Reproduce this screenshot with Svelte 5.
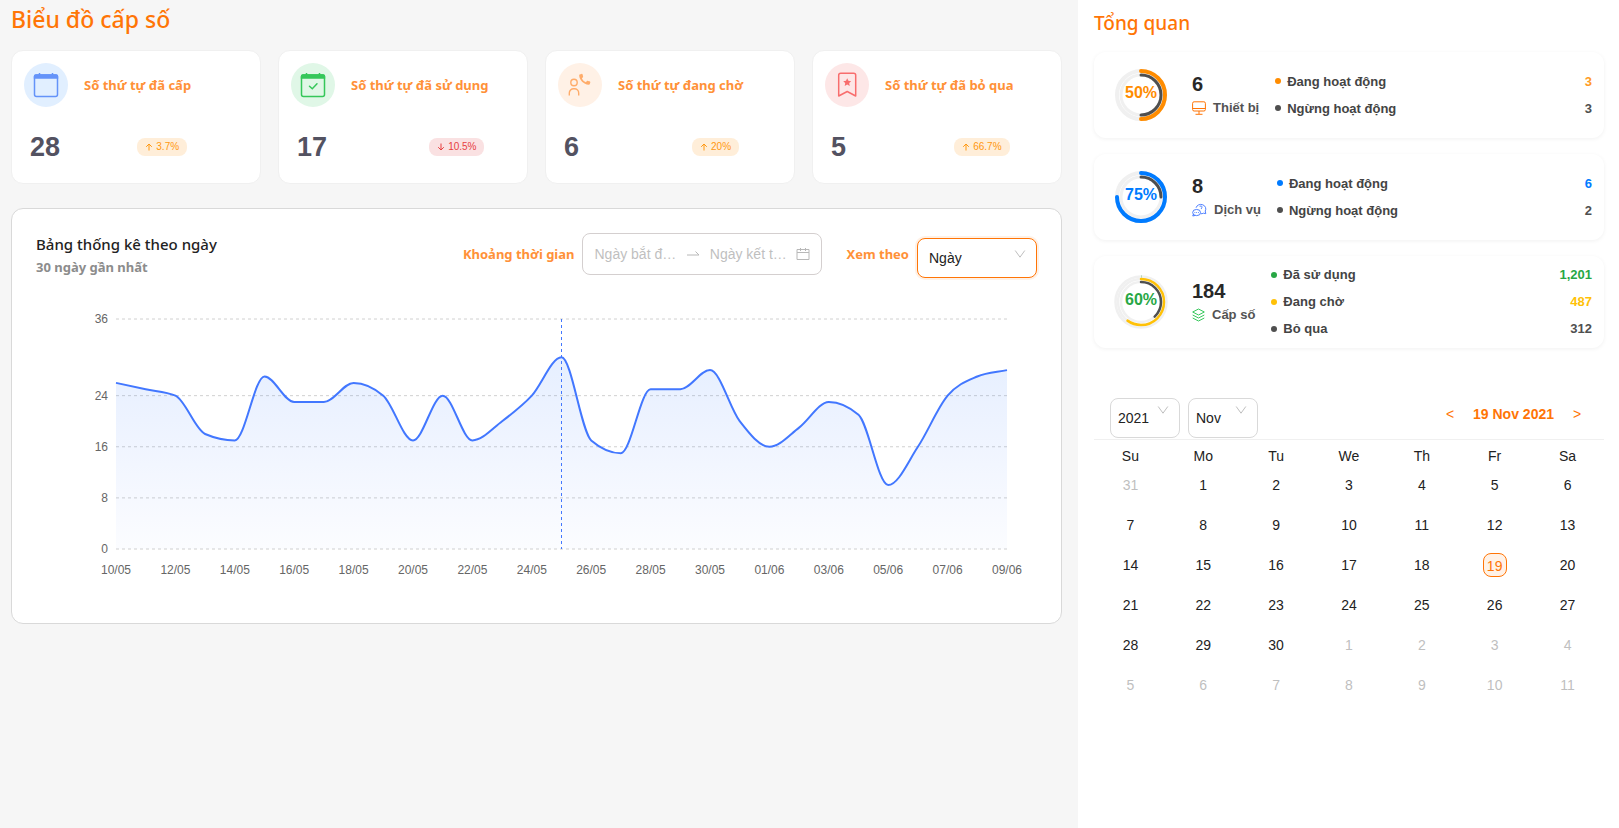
<script>
  const cards = [
    { icon: 'calendar', tone: 'blue', label: 'Số thứ tự đã cấp', value: 28, change: '3.7%', up: true },
    { icon: 'check', tone: 'green', label: 'Số thứ tự đã sử dụng', value: 17, change: '10.5%', up: false },
    { icon: 'contact', tone: 'orange', label: 'Số thứ tự đang chờ', value: 6, change: '20%', up: true },
    { icon: 'bookmark', tone: 'red', label: 'Số thứ tự đã bỏ qua', value: 5, change: '66.7%', up: true }
  ];

  const overview = [
    {
      icon: 'device', name: 'Thiết bị', total: 6, percent: 50, color: '#ff8c00',
      rings: [
        { r: 24, w: 4, share: 0.5, color: '#ff8c00' },
        { r: 20, w: 3, share: 0.5, color: '#4f4f4f' }
      ],
      rows: [
        { name: 'Đang hoạt động', value: '3', color: '#ff8c00', text: '#ff9b26' },
        { name: 'Ngừng hoạt động', value: '3', color: '#4f4f4f', text: '#4f4f4f' }
      ]
    },
    {
      icon: 'service', name: 'Dịch vụ', total: 8, percent: 75, color: '#007bff',
      rings: [
        { r: 24, w: 4, share: 0.75, color: '#007bff' },
        { r: 20, w: 3, share: 0.25, color: '#4f4f4f' }
      ],
      rows: [
        { name: 'Đang hoạt động', value: '6', color: '#007bff', text: '#007bff' },
        { name: 'Ngừng hoạt động', value: '2', color: '#4f4f4f', text: '#4f4f4f' }
      ]
    },
    {
      icon: 'layers', name: 'Cấp số', total: 184, percent: 60, color: '#28a745',
      rings: [
        { r: 25.5, w: 2.5, share: 0.002, color: '#28a745' },
        { r: 23, w: 2.5, share: 0.6, color: '#ffc107' },
        { r: 20, w: 2.5, share: 0.38, color: '#4f4f4f' }
      ],
      rows: [
        { name: 'Đã sử dụng', value: '1,201', color: '#28a745', text: '#28a745' },
        { name: 'Đang chờ', value: '487', color: '#ffc107', text: '#ffc107' },
        { name: 'Bỏ qua', value: '312', color: '#4f4f4f', text: '#4f4f4f' }
      ]
    }
  ];

  const weekdays = ['Su', 'Mo', 'Tu', 'We', 'Th', 'Fr', 'Sa'];
  const weeks = Array.from({ length: 6 }, (_, w) =>
    Array.from({ length: 7 }, (_, d) => {
      const n = w * 7 + d;
      if (n === 0) return { day: 31, other: true };
      if (n > 30) return { day: n - 30, other: true };
      return { day: n, other: false };
    })
  );

  const series = [26, 25, 24, 18, 17, 27, 23, 23, 26, 24, 17, 24, 17, 20, 24, 30, 17, 15, 25, 25, 28, 20, 16, 19, 23, 21, 10, 16, 24, 27, 28];
  const dates = ['10/05', '12/05', '14/05', '16/05', '18/05', '20/05', '22/05', '24/05', '26/05', '28/05', '30/05', '01/06', '03/06', '05/06', '07/06', '09/06'];
  const ticks = [36, 24, 16, 8, 0];
  const top = 41;
  const bottom = 271;
  const left = 80;

  let width = $state(1001);
  const right = $derived(width - 30);
  const xAt = (i) => left + ((right - left) * i) / (series.length - 1);
  const yAt = (v) => bottom - ((bottom - top) * v) / 36;

  // Monotone cubic through evenly spaced samples: never overshoots a value.
  function smooth(pts) {
    const step = pts[1][0] - pts[0][0];
    const rise = pts.slice(1).map((p, i) => p[1] - pts[i][1]);
    const tangent = pts.map((_, i) => {
      if (i === 0) return rise[0];
      if (i === pts.length - 1) return rise[i - 1];
      const a = rise[i - 1];
      const b = rise[i];
      return (Math.sign(a) + Math.sign(b)) * Math.min(Math.abs(a), Math.abs(b), Math.abs(a + b) / 4);
    });
    return pts
      .map((p, i) => {
        if (!i) return `M${p}`;
        const q = pts[i - 1];
        return `C${q[0] + step / 3},${q[1] + tangent[i - 1] / 3} ${p[0] - step / 3},${p[1] - tangent[i] / 3} ${p}`;
      })
      .join('');
  }

  const line = $derived(smooth(series.map((v, i) => [xAt(i), yAt(v)])));
</script>

{#snippet chevron()}
  <svg class="chevron" viewBox="0 0 12 12" aria-hidden="true"><path d="M1.2 2.5 6 9.2 10.800 2.5" /></svg>
{/snippet}

<div class="page">
  <main>
    <h1>Biểu đồ cấp số</h1>

    <section class="cards">
      {#each cards as card}
        <article class="card">
          <div class="fit">
            <div class="head">
              <span class="disc {card.tone}">
                {#if card.icon === 'calendar' || card.icon === 'check'}
                  <svg viewBox="0 0 26 26" aria-hidden="true">
                    <rect x="1.500" y="3" width="23" height="21.500" rx="2" fill="none" stroke="currentColor" stroke-width="1.500" />
                    <path d="M.8 6.800V4.300a2 2 0 0 1 2-2h20.400a2 2 0 0 1 2 2v2.500z" fill="currentColor" />
                    <path d="M6.500 1v2M19.500 1v2" stroke="currentColor" stroke-width="1.500" />
                    {#if card.icon === 'check'}
                      <path d="M9.500 14.200l2.800 2.600 4.700-5" fill="none" stroke="currentColor" stroke-width="1.500" stroke-linecap="round" />
                    {/if}
                  </svg>
                {:else if card.icon === 'contact'}
                  <svg viewBox="0 0 26 26" aria-hidden="true">
                    <circle cx="7" cy="10.500" r="3.200" fill="none" stroke="currentColor" stroke-width="1.400" />
                    <path d="M2.300 23.500v-2.500a4.300 4.300 0 0 1 4.300-4.300h.8a4.300 4.300 0 0 1 4.300 4.300v2.500" fill="none" stroke="currentColor" stroke-width="1.400" />
                    <path d="M12.700 2.600l1.800-.7c.5-.2 1 .1 1.100.6l.5 2c.1.400 0 .8-.4 1.100l-.8.600c.7 1.800 2.200 3.300 4 4.100l.8-1c.3-.4.7-.5 1.100-.4l1.800.4c.5.100.8.6.7 1.100l-.5 1.700c-.1.500-.6.800-1.100.7-5.200-.6-9.300-4.600-9.500-9.300 0-.4.100-.8.500-.9z" fill="currentColor" />
                  </svg>
                {:else}
                  <svg viewBox="0 0 26 26" aria-hidden="true">
                    <path d="M4.700 24V3.300a2 2 0 0 1 2-2h13a2 2 0 0 1 2 2V24L13.200 19.500z" fill="none" stroke="currentColor" stroke-width="1.500" stroke-linejoin="round" />
                    <path d="M13.200 6.300l1.200 2.500 2.800.4-2 1.900.5 2.800-2.500-1.300-2.500 1.300.5-2.800-2-1.900 2.800-.4z" fill="currentColor" />
                  </svg>
                {/if}
              </span>
              <span class="label">{card.label}</span>
            </div>
            <div class="figures">
              <strong>{card.value}</strong>
              <span class="badge" class:down={!card.up}>
                <svg viewBox="0 0 8 8" aria-hidden="true">
                  <path d={card.up ? 'M4 7.500V1M1.200 3.800 4 1l2.800 2.800' : 'M4 .5V7M1.200 4.200 4 7l2.800-2.800'} />
                </svg>
                {card.change}
              </span>
            </div>
          </div>
        </article>
      {/each}
    </section>

    <section class="panel">
      <header>
        <div class="titles">
          <h2>Bảng thống kê theo ngày</h2>
          <p>30 ngày gần nhất</p>
        </div>
        <div class="controls">
          <label class="label" for="from">Khoảng thời gian</label>
          <div class="range">
            <input id="from" type="text" placeholder="Ngày bắt đầu" />
            <svg class="arrow" viewBox="0 0 16 16" aria-hidden="true"><path d="M2 9h12L10.500 5.500" /></svg>
            <input type="text" placeholder="Ngày kết thúc" aria-label="Ngày kết thúc" />
            <svg class="cal" viewBox="0 0 14 14" aria-hidden="true"><path d="M1 2.500h12v10H1zM1 5.500h12M4.500 1v3M9.500 1v3" /></svg>
          </div>
          <label class="label view" for="view">Xem theo</label>
          <div class="select active">
            <select id="view"><option>Ngày</option><option>Tuần</option><option>Tháng</option></select>
            {@render chevron()}
          </div>
        </div>
      </header>

      <div class="chart" bind:clientWidth={width}>
        <svg width="100%" height="321" role="img" aria-label="Bảng thống kê theo ngày">
          <defs>
            <linearGradient id="area" gradientUnits="userSpaceOnUse" x1="0" y1={yAt(30)} x2="0" y2={bottom}>
              <stop offset="0" stop-color="#3f84ff" stop-opacity="0.13" />
              <stop offset="1" stop-color="#4277ff" stop-opacity="0.02" />
            </linearGradient>
          </defs>
          {#each ticks as t}
            <line class="grid" x1={left} x2={right} y1={yAt(t)} y2={yAt(t)} />
            <text class="tick" x={left - 8} y={yAt(t) + 4} text-anchor="end">{t}</text>
          {/each}
          <path d="{line}L{right},{bottom}L{left},{bottom}Z" fill="url(#area)" />
          <line class="cursor" x1={xAt(15)} x2={xAt(15)} y1={top} y2={bottom} />
          <path class="line" d={line} />
          {#each dates as d, i}
            <text class="tick" x={xAt(i * 2)} y={bottom + 25} text-anchor="middle">{d}</text>
          {/each}
        </svg>
      </div>
    </section>
  </main>

  <aside>
    <h2 class="heading">Tổng quan</h2>

    <div class="overview">
      {#each overview as item}
        <article class="item">
          <div class="ring">
            <svg viewBox="0 0 54 54" aria-hidden="true">
              {#each item.rings as ring}
                <circle cx="27" cy="27" r={ring.r} fill="none" stroke="#f0f0f0" stroke-width={ring.w} />
              {/each}
              {#each item.rings as ring}
                <circle
                  cx="27" cy="27" r={ring.r} fill="none" stroke={ring.color} stroke-width={ring.w}
                  stroke-linecap={ring.share > 0.01 ? 'round' : 'butt'} pathLength="1"
                  stroke-dasharray="{ring.share} 2" transform="rotate(-90 27 27)"
                />
              {/each}
            </svg>
            <span style:color={item.color}>{item.percent}%</span>
          </div>
          <div class="total">
            <strong>{item.total}</strong>
            <span class="kind">
              {#if item.icon === 'device'}
                <svg width="14" height="14" viewBox="0 0 14 14" fill="none" stroke="#ff7506" aria-hidden="true">
                  <rect x=".6" y=".8" width="12.800" height="9.200" rx="1.500" /><path d="M.6 7.500h12.800M7 10v3M3.500 13.300h7" />
                </svg>
              {:else if item.icon === 'service'}
                <svg width="15" height="14" viewBox="0 0 16 14" fill="none" stroke="#4277ff" aria-hidden="true">
                  <path d="M4.300 4.600a5.300 4.800 0 1 1 9.800 3.500l.6 2.800-2.500-.5a5.300 4.800 0 0 1-2.900.6" />
                  <ellipse cx="4.900" cy="9.700" rx="4.200" ry="3.300" />
                  <path d="M1.500 11.400l-.7 2 2.600-.6M2.600 9.700h.9M4.500 9.700h.9M6.400 9.700h.9M8.300 3.800a1.200 1.200 0 1 1 1.700 1.200v1" />
                </svg>
              {:else}
                <svg width="13" height="14" viewBox="0 0 13 14" fill="none" stroke="#35c75a" stroke-linejoin="round" aria-hidden="true">
                  <path d="M6.500 1 12.300 4 6.500 7 .7 4zM.7 7l5.800 3 5.800-3M.7 10l5.800 3 5.800-3" />
                </svg>
              {/if}
              {item.name}
            </span>
          </div>
          <ul>
            {#each item.rows as row}
              <li>
                <i style:background={row.color}></i>
                <span>{row.name}</span>
                <b style:color={row.text}>{row.value}</b>
              </li>
            {/each}
          </ul>
        </article>
      {/each}
    </div>

    <section class="calendar">
      <div class="toolbar">
        <div class="select">
          <select aria-label="Năm"><option>2021</option></select>
          {@render chevron()}
        </div>
        <div class="select">
          <select aria-label="Tháng"><option>Nov</option></select>
          {@render chevron()}
        </div>
        <div class="pager">
          <button type="button" aria-label="Ngày trước">&lt;</button>
          <strong>19 Nov 2021</strong>
          <button type="button" aria-label="Ngày sau">&gt;</button>
        </div>
      </div>
      <table>
        <thead>
          <tr>{#each weekdays as d}<th scope="col">{d}</th>{/each}</tr>
        </thead>
        <tbody>
          {#each weeks as week}
            <tr>
              {#each week as cell}
                <td class:other={cell.other}>
                  <span class:today={!cell.other && cell.day === 19}>{cell.day}</span>
                </td>
              {/each}
            </tr>
          {/each}
        </tbody>
      </table>
    </section>
  </aside>
</div>

<style>
  :global(body) {
    margin: 0;
    background: #fff;
  }

  .page {
    --ui: "Liberation Sans", Arial, sans-serif;
    --head: "Segoe UI", "Noto Sans", sans-serif;
    display: grid;
    grid-template-columns: minmax(0, 1fr) 541px;
    min-height: 100vh;
    font: 14px/22px var(--ui);
    color: #222;
  }

  .page * {
    box-sizing: border-box;
  }

  h1,
  h2,
  p,
  ul {
    margin: 0;
    padding: 0;
  }

  main {
    padding: 0 16px 0 11px;
    background: #f6f6f6;
  }

  h1,
  .heading {
    font-family: var(--head);
    font-weight: 500;
    color: #ff7506;
  }

  h1 {
    font-size: 23px;
    line-height: 38px;
  }

  .cards {
    display: grid;
    grid-template-columns: repeat(4, 1fr);
    gap: 17px;
    margin: 12px 0 24px;
  }

  .card {
    height: 134px;
    padding: 12px;
    border: 1px solid #f0f0f0;
    border-radius: 12px;
    background: #fff;
  }

  .fit {
    display: inline-block;
  }

  .head {
    display: flex;
    align-items: center;
    gap: 16px;
  }

  .disc {
    display: grid;
    place-items: center;
    width: 44px;
    height: 44px;
    border-radius: 50%;
  }

  .disc svg {
    width: 26px;
    height: 26px;
  }

  .blue {
    background: #e1efff;
    color: #6493f9;
  }

  .green {
    background: #e0f7e7;
    color: #35c75a;
  }

  .orange {
    background: #fff1e6;
    color: #ffac6a;
  }

  .red {
    background: #fde7e7;
    color: #f86d6d;
  }

  .label {
    font: 700 13px/22px var(--head);
    color: #ff9138;
    white-space: nowrap;
  }

  .figures {
    display: flex;
    align-items: center;
    justify-content: space-between;
    margin-top: 24px;
    padding: 0 4px 0 6px;
  }

  .figures strong {
    font-size: 27px;
    line-height: 32px;
    color: #535261;
  }

  .badge {
    display: flex;
    align-items: center;
    gap: 3px;
    height: 18px;
    padding: 0 8px;
    border-radius: 8px;
    background: #ffeed9;
    color: #ff9810;
    font-size: 10px;
  }

  .badge.down {
    background: #fae1e2;
    color: #e73f3f;
  }

  .badge svg {
    width: 8px;
    height: 8px;
    fill: none;
    stroke: currentColor;
  }

  .panel {
    padding: 21px 24px 24px;
    border: 1px solid #d9d9d9;
    border-radius: 12px;
    background: #fff;
  }

  header {
    display: flex;
    align-items: center;
    justify-content: space-between;
  }

  .titles {
    padding-top: 2px;
    font-family: var(--head);
  }

  .titles h2 {
    font-size: 15px;
    font-weight: 500;
    line-height: 24px;
  }

  .titles p {
    font-size: 13px;
    font-weight: 700;
    color: #8c8c8c;
  }

  .controls {
    display: flex;
    align-items: center;
    gap: 8px;
  }

  .view {
    margin-left: 16px;
  }

  .range {
    display: flex;
    align-items: center;
    justify-content: space-between;
    width: 240px;
    height: 42px;
    padding: 0 11px;
    border: 1px solid #d4cfcf;
    border-radius: 8px;
    background: #fff;
  }

  .range input {
    width: 82px;
    padding: 0;
    border: 0;
    outline: 0;
    background: none;
    font: 14px/22px var(--ui);
    color: #222;
    text-overflow: ellipsis;
  }

  .range input::placeholder {
    color: #bfbfbf;
    opacity: 1;
  }

  .range svg {
    fill: none;
    stroke: #b8b8b8;
  }

  .arrow {
    width: 16px;
    height: 16px;
    margin: 0 4px;
  }

  .cal {
    width: 14px;
    height: 14px;
  }

  .select {
    position: relative;
    width: 70px;
  }

  .select select {
    display: block;
    width: 100%;
    height: 40px;
    padding: 0 7px;
    border: 1px solid #d9d9d9;
    border-radius: 8px;
    outline: 0;
    appearance: none;
    background: #fff;
    font: 14px/22px var(--ui);
    color: #222;
  }

  .select.active {
    width: 120px;
    margin-top: 8px;
  }

  .active select {
    padding: 0 11px;
    border-color: #ff7506;
    box-shadow: 0 0 0 2px #fff1e6;
  }

  .chevron {
    position: absolute;
    top: 6px;
    right: 11px;
    width: 12px;
    height: 12px;
    fill: none;
    stroke: #bfbfbf;
    pointer-events: none;
  }

  .active .chevron {
    top: 10px;
  }

  .chart svg {
    display: block;
  }

  .grid {
    stroke: #d0d0d0;
    stroke-dasharray: 3 3;
  }

  .tick {
    font-size: 12px;
    fill: #666;
  }

  .cursor {
    stroke: #4277ff;
    stroke-dasharray: 3 3;
  }

  .line {
    fill: none;
    stroke: #4277ff;
    stroke-width: 2;
  }

  aside {
    padding: 3px 15px 0 16px;
  }

  .heading {
    font-size: 19px;
    line-height: 40px;
  }

  .overview {
    display: grid;
    gap: 16px;
    margin-top: 9px;
  }

  .item {
    display: flex;
    align-items: center;
    min-height: 86px;
    padding: 5px 12px 6px 20px;
    border-radius: 12px;
    box-shadow: 0 1px 4px #0000000f;
  }

  .ring {
    display: grid;
    place-items: center;
    width: 54px;
    height: 54px;
    margin-right: 24px;
    font-size: 16px;
    font-weight: 700;
    line-height: 20px;
  }

  .ring > * {
    grid-area: 1 / 1;
  }

  .ring span {
    padding-bottom: 4px;
  }

  .ring svg {
    width: 54px;
    height: 54px;
  }

  .total {
    display: grid;
    margin-right: 16px;
  }

  .total strong {
    font-size: 20px;
    line-height: 26px;
    color: #282828;
  }

  .kind {
    display: flex;
    align-items: center;
    gap: 7px;
    font-size: 13px;
    font-weight: 700;
    color: #535353;
    white-space: nowrap;
  }

  ul {
    flex: 1;
    list-style: none;
  }

  li {
    display: flex;
    align-items: center;
    font-size: 13px;
    font-weight: 700;
    line-height: 27px;
    color: #444;
  }

  li i {
    width: 6px;
    height: 6px;
    margin-right: 6px;
    border-radius: 50%;
  }

  li b {
    margin-left: auto;
  }

  .calendar {
    margin-top: 50px;
  }

  .toolbar {
    display: flex;
    gap: 8px;
    padding: 0 16px 1px;
    border-bottom: 1px solid #f0f0f0;
  }

  .pager {
    display: flex;
    align-items: center;
    gap: 12px;
    height: 32px;
    margin-left: auto;
    color: #ff7506;
  }

  .pager button {
    width: 22px;
    padding: 0;
    border: 0;
    background: none;
    font: 14px/22px var(--ui);
    color: #ff7506;
  }

  table {
    width: 100%;
    margin-top: 8px;
    border-collapse: collapse;
    table-layout: fixed;
  }

  th,
  td {
    padding: 0;
    text-align: center;
  }

  th {
    font-weight: 400;
    line-height: 17px;
  }

  td {
    height: 40px;
  }

  .other {
    color: #bfbfbf;
  }

  .today {
    display: inline-block;
    width: 24px;
    height: 24px;
    border: 1px solid #ff7506;
    border-radius: 8px;
    background: #fff2e7;
    color: #ff7506;
    line-height: 24px;
  }
</style>
